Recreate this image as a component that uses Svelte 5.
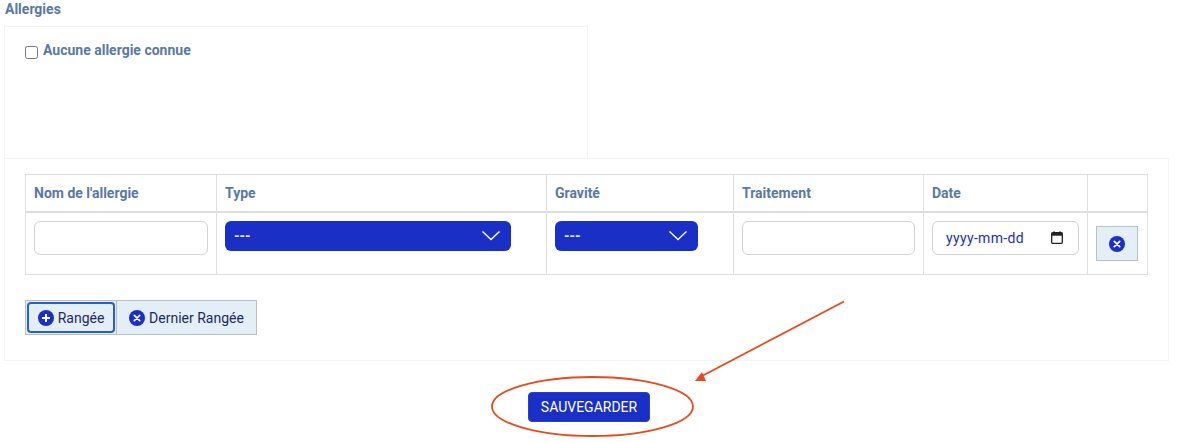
<script lang="ts">
  const columns = [
    { label: "Nom de l'allergie", width: 191 },
    { label: "Type", width: 330 },
    { label: "Gravité", width: 187 },
    { label: "Traitement", width: 190 },
    { label: "Date", width: 164 },
    { label: "", width: 60 }
  ];

  let noAllergy = $state(false);
</script>

{#snippet chevron()}
  <svg class="chevron" width="20" height="11" viewBox="0 0 20 11" fill="none" stroke="#fff" stroke-width="1.4" aria-hidden="true">
    <path d="M1.5 1.5 L10 9.5 L18.5 1.5" />
  </svg>
{/snippet}

{#snippet closeIcon()}
  <svg class="round-icon" width="16" height="16" viewBox="0 0 16 16" aria-hidden="true">
    <circle cx="8" cy="8" r="8" fill="#1a2fc6" />
    <path d="M5.3 5.3 L10.7 10.7 M10.7 5.3 L5.3 10.7" stroke="#fff" stroke-width="1.7" stroke-linecap="round" />
  </svg>
{/snippet}

<div class="page">
  <div class="section-title">Allergies</div>

  <div class="allergy-check">
    <label class="check-row">
      <input type="checkbox" bind:checked={noAllergy} />
      <span>Aucune allergie connue</span>
    </label>
  </div>

  <div class="allergy-table">
    <table>
      <colgroup>
        {#each columns as col}
          <col style="width: {col.width}px" />
        {/each}
      </colgroup>
      <thead>
        <tr>
          {#each columns as col}
            <th>{col.label}</th>
          {/each}
        </tr>
      </thead>
      <tbody>
        <tr>
          <td><input class="field" type="text" /></td>
          <td>
            <div class="select type">
              <span>---</span>
              {@render chevron()}
            </div>
          </td>
          <td>
            <div class="select severity">
              <span>---</span>
              {@render chevron()}
            </div>
          </td>
          <td><input class="field" type="text" /></td>
          <td>
            <div class="field date">
              <span>yyyy-mm-dd</span>
              <svg width="12" height="13" viewBox="0 0 12 13" fill="none" aria-hidden="true">
                <rect x="0.7" y="1.7" width="10.6" height="10.6" rx="1" stroke="#222" stroke-width="1.3" />
                <rect x="0.7" y="1.7" width="10.6" height="3" fill="#222" />
                <path d="M3 0.3 V2 M9 0.3 V2" stroke="#222" stroke-width="1.2" />
              </svg>
            </div>
          </td>
          <td>
            <button class="remove-row" type="button" aria-label="Supprimer">
              {@render closeIcon()}
            </button>
          </td>
        </tr>
      </tbody>
    </table>

    <div class="row-actions">
      <button class="action focused" type="button">
        <svg class="round-icon" width="16" height="16" viewBox="0 0 16 16" aria-hidden="true">
          <circle cx="8" cy="8" r="8" fill="#1a2fc6" />
          <path d="M8 4 V12 M4 8 H12" stroke="#fff" stroke-width="2" />
        </svg>
        Rangée
      </button>
      <button class="action" type="button">
        {@render closeIcon()}
        Dernier Rangée
      </button>
    </div>
  </div>

  <div class="save-row">
    <button class="save" type="button">SAUVEGARDER</button>
  </div>

  <!-- annotation drawn over the screenshot -->
  <svg class="annotation" width="1185" height="442" viewBox="0 0 1185 442" fill="none" aria-hidden="true">
    <ellipse cx="592.5" cy="406.5" rx="100.5" ry="29.5" stroke="#e8491d" stroke-width="1.8" />
    <path d="M844 301.5 L702 376" stroke="#e8491d" stroke-width="1.8" />
    <path d="M695 381 L702 372 L706 381 Z" fill="#e8491d" />
  </svg>
</div>

<style>
  :global(body) {
    margin: 0;
    background: #fff;
  }

  .page {
    position: relative;
    width: 1185px;
    height: 442px;
    overflow: hidden;
    font-family: Roboto, "Liberation Sans", sans-serif;
    font-size: 14px;
    color: #5a78a6;
  }

  .section-title {
    height: 26px;
    padding: 1px 0 0 5px;
    box-sizing: border-box;
    font-size: 14px;
    line-height: 17px;
    font-weight: 700;
  }

  .allergy-check {
    width: 584px;
    height: 132px;
    margin-left: 4px;
    padding: 15px 20px;
    box-sizing: border-box;
    border: 1px solid #f1f3f8;
    border-bottom: none;
  }

  .check-row {
    display: flex;
    align-items: flex-start;
    gap: 5px;
    font-size: 14px;
    line-height: 16px;
    font-weight: 700;
  }

  .check-row input {
    width: 13px;
    height: 13px;
    margin: 4px 0 0;
  }

  .allergy-table {
    width: 1165px;
    height: 203px;
    margin-left: 4px;
    padding: 15px 20px 0;
    box-sizing: border-box;
    border: 1px solid #f1f3f8;
  }

  table {
    width: 1122px;
    table-layout: fixed;
    border-collapse: collapse;
  }

  th,
  td {
    border: 1px solid #dcdee1;
    padding: 0 8px;
    text-align: left;
  }

  th {
    height: 37px;
    padding-top: 1px;
    box-sizing: border-box;
    border-bottom: 2px solid #dcdee1;
    font-size: 14px;
    font-weight: 700;
    color: #5a78a6;
  }

  td {
    height: 63px;
    padding-top: 8px;
    padding-bottom: 0;
    vertical-align: top;
    box-sizing: border-box;
  }

  .field {
    display: block;
    width: 100%;
    height: 34px;
    box-sizing: border-box;
    border: 1px solid #ced4da;
    border-radius: 6px;
    background: #fff;
    outline: none;
  }

  .date {
    display: flex;
    align-items: center;
    justify-content: space-between;
    padding: 0 15px 0 13px;
    font-size: 14px;
    letter-spacing: 0.35px;
    color: #1a2fc6;
  }

  .select {
    display: flex;
    align-items: center;
    justify-content: space-between;
    height: 30px;
    padding: 0 10px 0 9px;
    box-sizing: border-box;
    border-radius: 6px;
    background: #1a2fc6;
    font-size: 14px;
    font-weight: 700;
    color: #e8ebfa;
  }

  .select.type {
    width: 286px;
  }

  .select.severity {
    width: 143px;
  }

  .chevron {
    display: block;
  }

  .remove-row {
    display: flex;
    align-items: center;
    justify-content: center;
    width: 42px;
    height: 35px;
    margin-top: 5px;
    padding: 2px 0 0;
    border: 1px solid #b9bfc7;
    background: #e4eef6;
  }

  .round-icon {
    display: block;
    flex: none;
  }

  .row-actions {
    display: flex;
    width: 232px;
    height: 35px;
    margin-top: 25px;
  }

  .action {
    display: flex;
    align-items: center;
    justify-content: center;
    gap: 4px;
    flex: 1;
    padding: 0;
    border: 1px solid #b9bfc7;
    background: #e4eef6;
    font-family: inherit;
    font-size: 14px;
    color: #1f2a5c;
  }

  .action + .action {
    border-left: none;
  }

  .action.focused {
    position: relative;
    flex: none;
    width: 92px;
    box-sizing: border-box;
  }

  /* focus ring sits inside the grey border */
  .action.focused::before {
    content: "";
    position: absolute;
    inset: 1px;
    border: 2px solid #2a5fc9;
    border-radius: 4px;
  }

  .save-row {
    display: flex;
    justify-content: center;
    margin-top: 31px;
    padding-right: 7px;
  }

  .save {
    width: 122px;
    height: 30px;
    padding: 0;
    border: 1px solid #2a3fd0;
    border-radius: 4px;
    background: #1a2fc6;
    font-family: inherit;
    font-size: 14px;
    font-weight: 400;
    color: #fff;
  }

  .annotation {
    position: absolute;
    top: 0;
    left: 0;
    pointer-events: none;
  }
</style>
